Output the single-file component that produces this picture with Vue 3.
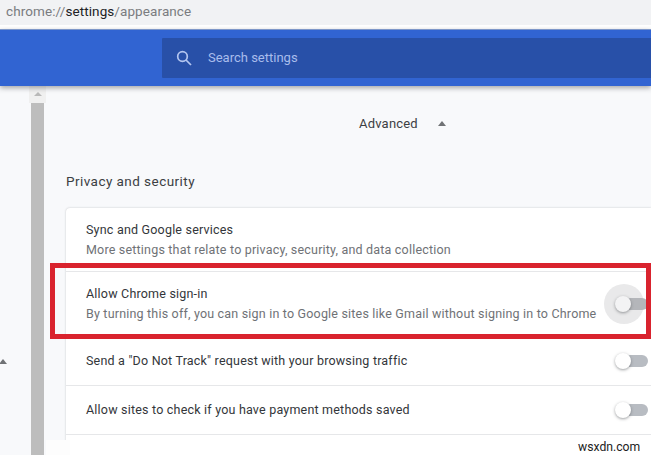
<script setup>
const rows = [
  { title: 'Sync and Google services', sub: 'More settings that relate to privacy, security, and data collection', kind: 'link' },
  { title: 'Allow Chrome sign-in', sub: 'By turning this off, you can sign in to Google sites like Gmail without signing in to Chrome', kind: 'focus' },
  { title: 'Send a "Do Not Track" request with your browsing traffic', kind: 'toggle' },
  { title: 'Allow sites to check if you have payment methods saved', kind: 'toggle' }
]
</script>

<template>
  <div class="page">
    <div class="address"><span class="dim">chrome://</span><span class="host">settings</span><span class="dim">/appearance</span></div>
    <header class="bar">
      <div class="search">
        <svg class="glass" width="18" height="18" viewBox="0 0 18 18" fill="none" stroke="#b4c6f0" stroke-width="1.7">
          <circle cx="7.5" cy="7.5" r="4.8" />
          <path d="M11 11l5 5" />
        </svg>
        <span class="placeholder">Search settings</span>
      </div>
    </header>
    <div class="body">
      <div class="gutter"><span class="tri gutter-tri"></span></div>
      <div class="track">
        <div class="track-btn"><span class="tri track-tri"></span></div>
        <div class="thumb"></div>
      </div>
      <main class="main">
        <div class="advanced"><span>Advanced</span><span class="tri adv-tri"></span></div>
        <h2 class="section">Privacy and security</h2>
        <section class="card">
          <div v-for="r in rows" :key="r.title" class="row" :class="'row-' + r.kind">
            <div class="text">
              <div class="title">{{ r.title }}</div>
              <div v-if="r.sub" class="sub">{{ r.sub }}</div>
            </div>
            <div v-if="r.kind !== 'link'" class="toggle" :class="{ focus: r.kind === 'focus' }">
              <span class="rail"></span>
              <span class="knob"></span>
            </div>
          </div>
          <div class="row row-end"></div>
        </section>
      </main>
      <div class="patch"></div>
    </div>
    <div class="redbox"></div>
    <div class="mark">wsxdn.com</div>
  </div>
</template>

<style>
html, body { margin: 0; background: #f8f9fb; }
</style>

<style scoped>
.page {
  position: relative;
  width: 651px;
  height: 455px;
  overflow: hidden;
  display: flex;
  flex-direction: column;
  background: #f8f9fb;
  font-family: Roboto, "Liberation Sans", sans-serif;
}
.address {
  height: 29px;
  flex: none;
  box-sizing: border-box;
  padding: 3px 0 0 6px;
  background: #f1f2f4;
  border-bottom: 4px solid #fff;
  font-size: 13.5px;
  line-height: 17px;
  letter-spacing: 0.09px;
}
.dim { color: #7a7c80; }
.host { color: #202124; }
.bar {
  height: 57px;
  flex: none;
  box-sizing: border-box;
  padding: 8px 0 8px 162px;
  background: #3164d2;
  border-top: 1px solid #7e97c9;
  box-shadow: 0 2px 5px rgba(60, 64, 67, 0.45);
  position: relative;
  z-index: 1;
}
.search {
  height: 40px;
  display: flex;
  align-items: center;
  padding-left: 13px;
  background: #2850a8;
  border-radius: 1px 0 0 1px;
}
.glass { flex: none; }
.placeholder {
  margin: 0 0 2px 15px;
  color: #a9bdec;
  font-size: 13px;
  letter-spacing: 0;
}
.body {
  flex: 1;
  display: flex;
  min-height: 0;
  position: relative;
}
.tri {
  display: block;
  width: 0;
  height: 0;
  border-left: 4.5px solid transparent;
  border-right: 4.5px solid transparent;
  border-bottom: 5px solid #707275;
}
.gutter {
  width: 29px;
  flex: none;
  padding-top: 273px;
  background: #f8f9fb;
}
.gutter-tri { margin-left: -1px; }
.track {
  width: 17px;
  flex: none;
  display: flex;
  flex-direction: column;
  align-items: center;
}
.track-btn {
  height: 17px;
  width: 17px;
  background: #f0f0f0;
  display: flex;
  justify-content: center;
  padding-top: 6px;
  box-sizing: border-box;
}
.track-tri { border-bottom-color: #b9b9b9; border-left-width: 4px; border-right-width: 4px; border-bottom-width: 4px; }
.thumb {
  width: 13px;
  flex: 1;
  background: #bdbdbd;
}
.main {
  flex: 1;
  min-width: 0;
  padding-left: 20px;
}
.advanced {
  display: flex;
  align-items: center;
  padding-left: 293px;
  margin-top: 29px;
  height: 16px;
  color: #3c4043;
  font-size: 13px;
  letter-spacing: 0.2px;
}
.adv-tri { margin-left: 20px; }
.section {
  margin: 42px 0 0;
  height: 16px;
  font-size: 13.5px;
  line-height: 16px;
  font-weight: 400;
  color: #3c4043;
  letter-spacing: 0.45px;
}
.card {
  margin-top: 19px;
  background: #fff;
  border-radius: 4px 0 0 0;
  box-shadow: 0 0 2px rgba(60, 64, 67, 0.3);
}
.row {
  box-sizing: border-box;
  display: flex;
  align-items: center;
  justify-content: space-between;
  padding: 0 3px 0 20px;
  border-top: 1px solid #e6e7e9;
}
.row:first-child { border-top: none; }
.row-link { height: 63px; }
.row-focus { height: 65px; }
.row-toggle { height: 49px; }
.row-end { height: 30px; }
.title {
  color: #33363a;
  font-size: 12.5px;
  line-height: 20px;
  letter-spacing: 0.2px;
  white-space: nowrap;
}
.sub {
  color: #6f7276;
  font-size: 12.5px;
  line-height: 20px;
  letter-spacing: 0.19px;
  white-space: nowrap;
}
.toggle {
  position: relative;
  flex: none;
  width: 32px;
  height: 12px;
}
.rail {
  position: absolute;
  left: 0;
  top: 0;
  width: 32px;
  height: 12px;
  border-radius: 6px;
  background: #b8bcc2;
}
.knob {
  position: absolute;
  left: -1px;
  top: -2px;
  width: 16px;
  height: 16px;
  border-radius: 50%;
  background: #fff;
  box-shadow: 0 1px 3px rgba(60, 64, 67, 0.5);
}
.toggle.focus::before {
  content: "";
  position: absolute;
  left: -12px;
  top: -14px;
  width: 40px;
  height: 40px;
  border-radius: 50%;
  background: #e9e9ea;
}
.toggle.focus .rail { background: #b4b6ba; }
.toggle.focus .knob { background: #f3f3f4; }
.patch {
  position: absolute;
  left: 46px;
  bottom: 0;
  width: 24px;
  height: 15px;
  background: #fdfdfd;
}
.redbox {
  position: absolute;
  left: 50px;
  top: 263px;
  right: 0;
  height: 76px;
  box-sizing: border-box;
  border: 5px solid #d9232e;
}
.mark {
  position: absolute;
  left: 578px;
  top: 439px;
  font-size: 12.2px;
  line-height: 16px;
  color: #222;
}
</style>
